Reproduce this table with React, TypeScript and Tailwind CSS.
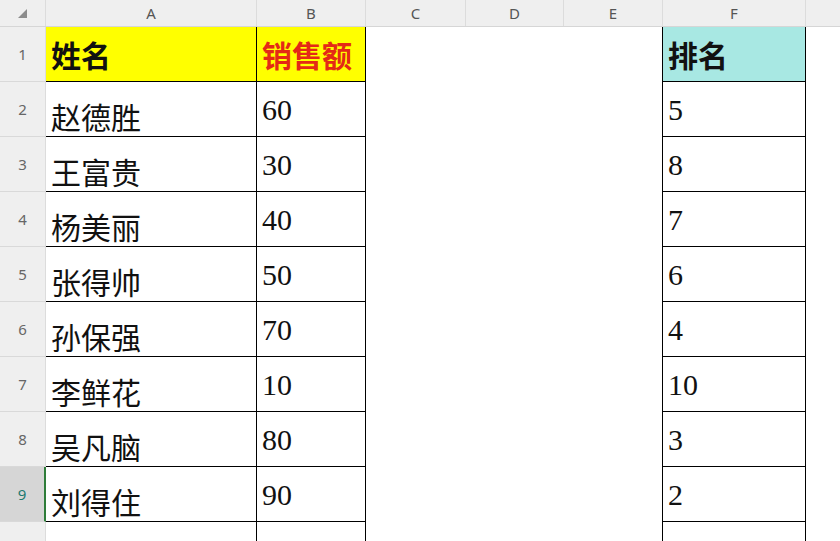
import React from "react";

const rows = [
  { name: "赵德胜", sales: "60", rank: "5" },
  { name: "王富贵", sales: "30", rank: "8" },
  { name: "杨美丽", sales: "40", rank: "7" },
  { name: "张得帅", sales: "50", rank: "6" },
  { name: "孙保强", sales: "70", rank: "4" },
  { name: "李鲜花", sales: "10", rank: "10" },
  { name: "吴凡脑", sales: "80", rank: "3" },
  { name: "刘得住", sales: "90", rank: "2" },
];

const cols = [
  { label: "A", w: "w-[211px]" },
  { label: "B", w: "w-[109px]" },
  { label: "C", w: "w-[100px]" },
  { label: "D", w: "w-[98px]" },
  { label: "E", w: "w-[99px]" },
  { label: "F", w: "w-[143px]" },
];

const cellFont = "font-['Liberation_Serif','Noto_Sans_CJK_SC',serif] text-[30px] leading-none text-[#111]";

function RowHead({ n, selected }: { n?: number; selected?: boolean }) {
  return (
    <div
      className={
        "w-[46px] shrink-0 flex items-center justify-center border-b border-[#d9d9d9] font-['Noto_Sans',sans-serif] text-[15px] " +
        (selected
          ? "bg-[#d6d6d6] text-[#1d7a70] border-r-2 border-r-[#2f7d3a]"
          : "bg-[#efefef] text-[#666] border-r border-r-[#dcdcdc]")
      }
    >
      {n}
    </div>
  );
}

function Row({
  n,
  a,
  b,
  f,
  head,
  selected,
}: {
  n?: number;
  a: string;
  b: string;
  f: string;
  head?: boolean;
  selected?: boolean;
}) {
  return (
    <div className="flex h-[55px] shrink-0">
      <RowHead n={n} selected={selected} />
      <div
        className={
          "w-[211px] shrink-0 flex items-end border-r border-b border-black pl-[5px] " +
          (head ? "bg-[#ffff00] pb-[9px]" : "pb-[2px]")
        }
      >
        <span className={cellFont + (head ? " font-bold" : "")}>{a}</span>
      </div>
      <div
        className={
          "w-[109px] shrink-0 flex items-end border-r border-b border-black pl-[5px] " +
          (head ? "bg-[#ffff00] pb-[9px]" : "pb-[11px]")
        }
      >
        <span className={cellFont + (head ? " font-bold text-[#e42a16]" : "")}>{b}</span>
      </div>
      <div className="w-[100px] shrink-0" />
      <div className="w-[98px] shrink-0" />
      <div className="w-[99px] shrink-0 border-r border-black" />
      <div
        className={
          "w-[143px] shrink-0 flex items-end border-r border-b border-black pl-[5px] " +
          (head ? "bg-[#a8e8e3] pb-[9px]" : "pb-[11px]")
        }
      >
        <span className={cellFont + (head ? " font-bold" : "")}>{f}</span>
      </div>
      <div className="flex-1" />
    </div>
  );
}

export default function App() {
  return (
    <div className="w-[840px] h-[541px] overflow-hidden bg-white flex flex-col">
      <div className="flex h-[27px] shrink-0 bg-[#efefef] border-b border-[#d6d6d6]">
        <div className="w-[46px] shrink-0 border-r border-[#dcdcdc] flex items-start pl-[18px] pt-[9px]">
          <svg width="9" height="9" viewBox="0 0 9 9">
            <polygon points="9,0 9,9 0,9" fill="#8c8c8c" />
          </svg>
        </div>
        {cols.map((c) => (
          <div
            key={c.label}
            className={
              c.w +
              " shrink-0 border-r border-[#dcdcdc] flex items-center justify-center font-['Noto_Sans',sans-serif] text-[15px] text-[#555]"
            }
          >
            {c.label}
          </div>
        ))}
        <div className="flex-1" />
      </div>
      <Row n={1} a="姓名" b="销售额" f="排名" head />
      {rows.map((r, i) => (
        <Row key={r.name} n={i + 2} a={r.name} b={r.sales} f={r.rank} selected={i + 2 === 9} />
      ))}
      <Row a="" b="" f="" />
    </div>
  );
}
